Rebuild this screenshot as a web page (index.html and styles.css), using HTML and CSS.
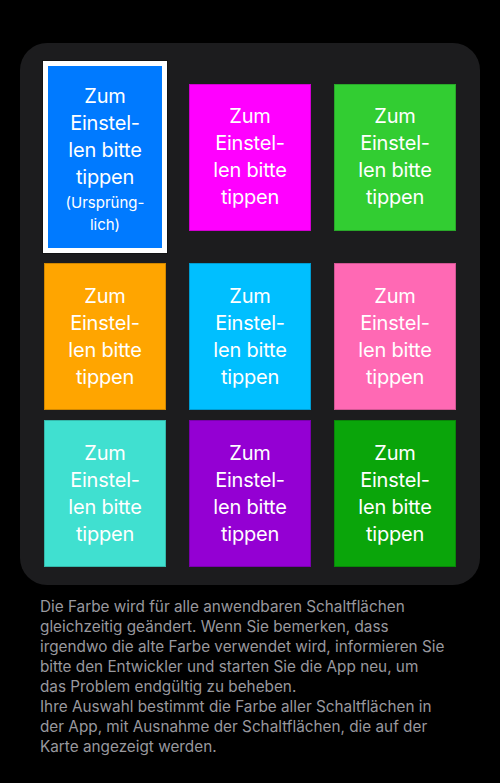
FILE: index.html
```html
<!DOCTYPE html>
<html lang="de">
<head>
<meta charset="utf-8">
<link rel="stylesheet" href="styles.css">
</head>
<body>
<div class="card">
  <div class="grid">
    <div class="tile selected c-blue">
      <span class="label">Zum<br>Einstel-<br>len bitte<br>tippen</span>
      <span class="sub">(Ursprüng-<br>lich)</span>
    </div>
    <div class="tile c-magenta"><span class="label">Zum<br>Einstel-<br>len bitte<br>tippen</span></div>
    <div class="tile c-lime"><span class="label">Zum<br>Einstel-<br>len bitte<br>tippen</span></div>
    <div class="tile c-orange"><span class="label">Zum<br>Einstel-<br>len bitte<br>tippen</span></div>
    <div class="tile c-sky"><span class="label">Zum<br>Einstel-<br>len bitte<br>tippen</span></div>
    <div class="tile c-pink"><span class="label">Zum<br>Einstel-<br>len bitte<br>tippen</span></div>
    <div class="tile c-turq"><span class="label">Zum<br>Einstel-<br>len bitte<br>tippen</span></div>
    <div class="tile c-violet"><span class="label">Zum<br>Einstel-<br>len bitte<br>tippen</span></div>
    <div class="tile c-green"><span class="label">Zum<br>Einstel-<br>len bitte<br>tippen</span></div>
  </div>
</div>
<p class="note">Die Farbe wird für alle anwendbaren Schaltflächen<br>gleichzeitig geändert. Wenn Sie bemerken, dass<br>irgendwo die alte Farbe verwendet wird, informieren Sie<br>bitte den Entwickler und starten Sie die App neu, um<br>das Problem endgültig zu beheben.<br>Ihre Auswahl bestimmt die Farbe aller Schaltflächen in<br>der App, mit Ausnahme der Schaltflächen, die auf der<br>Karte angezeigt werden.</p>
</body>
</html>
```

FILE: styles.css
```css
html, body {
  margin: 0;
  padding: 0;
  background: #000;
}
body {
  width: 500px;
  height: 783px;
  overflow: hidden;
  font-family: Inter, "Noto Sans", "DejaVu Sans", sans-serif;
}
.card {
  margin: 43px 20px 0 20px;
  width: 460px;
  box-sizing: border-box;
  padding: 18px 24px;
  background: #1c1c1e;
  border-radius: 27px;
}
.grid {
  display: grid;
  grid-template-columns: repeat(3, 122px);
  grid-template-rows: 192px 147px 147px;
  column-gap: 23px;
  row-gap: 10px;
  align-items: center;
}
.tile {
  height: 147px;
  box-sizing: border-box;
  border: 1px solid rgba(0,0,0,0.18);
  display: flex;
  flex-direction: column;
  align-items: center;
  justify-content: center;
  color: #fff;
  text-align: center;
}
.label {
  font-size: 20px;
  line-height: 27px;
  letter-spacing: -0.2px;
}
.sub {
  font-size: 15px;
  line-height: 22px;
  margin-top: 1px;
}
.tile.selected {
  height: 192px;
  margin: 0 -1px;
  padding-top: 4px;
  border: 5px solid #fff;
  box-shadow: 0 0 0 1px rgba(0,0,0,0.3);
}
.c-blue { background: #007aff; }
.c-magenta { background: #ff00ff; }
.c-lime { background: #32cd32; }
.c-orange { background: #ffa500; }
.c-sky { background: #00bfff; }
.c-pink { background: #ff69b4; }
.c-turq { background: #40e0d0; }
.c-violet { background: #9400d3; }
.c-green { background: #0aa50a; }
.note {
  margin: 12px 0 0 40px;
  font-size: 15.3px;
  line-height: 20px;
  color: #98989e;
  white-space: nowrap;
}
```
